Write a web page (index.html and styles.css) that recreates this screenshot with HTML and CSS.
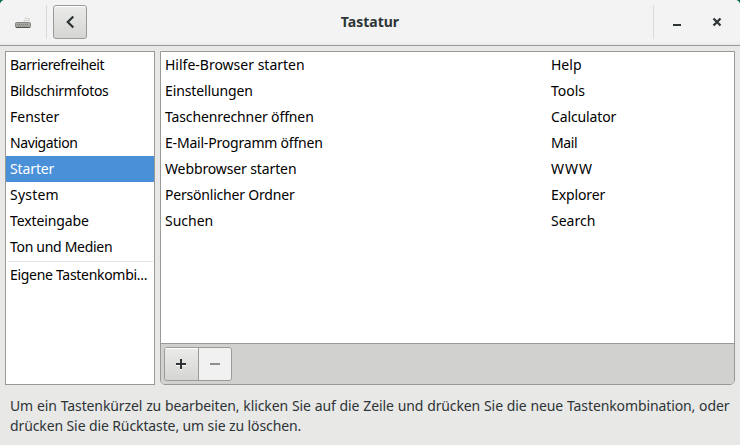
FILE: index.html
```html
<!DOCTYPE html>
<html lang="de">
<head>
<meta charset="utf-8">
<title>Tastatur</title>
<link rel="stylesheet" href="styles.css">
</head>
<body>
<div class="window">
  <header class="titlebar">
    <div class="app-icon">
      <svg width="18" height="16" viewBox="0 0 18 16"><path d="M10 8V6.5H15.5V4.5H10.5" fill="none" stroke="#d0d2cf"/><path d="M12 3.5V1.5" stroke="#e2e2e2"/><rect x="1.5" y="8.5" width="15" height="5" rx="1" fill="#a5a8a3" stroke="#858883"/><path d="M3 10.5H15M4 12H14" stroke="#7d807b" stroke-dasharray="1 1"/><path d="M2 13.5H16" stroke="#505350"/></svg>
    </div>
    <button class="back" aria-label="Zurück"><svg width="16" height="16" viewBox="0 0 16 16"><path d="M11.3 2.5L5.8 8L11.3 13.5" fill="none" stroke="#2e3436" stroke-width="2.2"/></svg></button>
    <h1>Tastatur</h1>
    <div class="controls">
      <svg width="16" height="16" viewBox="0 0 16 16"><path d="M4 11H12" stroke="#2e3436" stroke-width="2"/></svg>
      <svg width="16" height="16" viewBox="0 0 16 16"><path d="M4.5 4.5L11.5 11.5M11.5 4.5L4.5 11.5" stroke="#2e3436" stroke-width="2.3"/></svg>
    </div>
  </header>
  <main class="panes">
    <ul class="sidebar">
      <li class="tightest">Barrierefreiheit</li>
      <li class="tighter">Bildschirmfotos</li>
      <li>Fenster</li>
      <li class="tightest">Navigation</li>
      <li class="selected tight">Starter</li>
      <li class="loose">System</li>
      <li class="tight">Texteingabe</li>
      <li class="tighter">Ton und Medien</li>
      <li class="custom tighter">Eigene Tastenkombi...</li>
    </ul>
    <section class="shortcuts">
      <div class="rows">
        <div class="row"><span>Hilfe-Browser starten</span><span>Help</span></div>
        <div class="row"><span class="tight">Einstellungen</span><span>Tools</span></div>
        <div class="row"><span class="tight">Taschenrechner öffnen</span><span class="tight">Calculator</span></div>
        <div class="row"><span class="snug">E-Mail-Programm öffnen</span><span class="tightest">Mail</span></div>
        <div class="row"><span class="tight">Webbrowser starten</span><span class="loosest">WWW</span></div>
        <div class="row"><span class="snug">Persönlicher Ordner</span><span class="tight">Explorer</span></div>
        <div class="row"><span>Suchen</span><span>Search</span></div>
      </div>
      <div class="toolbar">
        <div class="group">
          <button class="add" aria-label="Hinzufügen"><svg width="16" height="16" viewBox="0 0 16 16"><path d="M3 9H13M8 4V14" stroke="#fff" stroke-width="2"/><path d="M3 8H13M8 3V13" stroke="#2e3436" stroke-width="2"/></svg></button>
          <button class="remove" aria-label="Entfernen" disabled><svg width="16" height="16" viewBox="0 0 16 16"><path d="M3 8H13" stroke="#8d9091" stroke-width="2"/></svg></button>
        </div>
      </div>
    </section>
  </main>
  <p class="hint"><span class="first">Um ein Tastenkürzel zu bearbeiten, klicken Sie auf die Zeile und drücken Sie die neue Tastenkombination, oder</span><span class="second">drücken Sie die Rücktaste, um sie zu löschen.</span></p>
</div>
</body>
</html>
```
FILE: styles.css
```css
* { box-sizing: border-box; }
body { margin: 0; background: #006b50; overflow: hidden; font: 14px/26px "Noto Sans", sans-serif; color: #000; }
.window { width: 740px; height: 445px; background: #e8e8e7; border-radius: 5px 5px 0 0; overflow: hidden; }
.titlebar { height: 46px; display: grid; grid-template-columns: 47px 47px 1fr 87px; background: linear-gradient(#f3f3f3 0 42px, #e9e9e9 45px); border-bottom: 1px solid #999a96; }
.app-icon { height: 34px; margin-top: 5px; padding: 9px 0 0 14px; border-right: 1px solid #dadada; }
svg { display: block; }
button { padding: 0; display: grid; place-items: center; border: 1px solid #9a9a96; background: linear-gradient(#ebebea, #d5d5d2); }
.back { width: 34px; height: 34px; margin: 5px 0 0 6px; border-radius: 3px; box-shadow: inset 0 1px #fff; }
h1 { margin: 0; font-size: 14px; line-height: 43px; text-align: center; color: #2e3436; padding-right: 7px; }
.controls { height: 34px; margin-top: 5px; border-left: 1px solid #dadada; display: flex; align-items: center; gap: 24px; padding-left: 15px; }
.panes { height: 339px; padding: 5px 5px 0; display: grid; grid-template-columns: 150px 575px; gap: 5px; }
.sidebar { height: 334px; margin: 0; padding: 0; list-style: none; background: #fff; border: 1px solid #999a96; }
.sidebar li { height: 26px; padding-left: 4px; white-space: nowrap; }
.sidebar .selected { background: #4a90d9; color: #fff; }
.sidebar .custom { height: 27px; margin: 1px 1px 0 2px; padding: 0 0 0 2px; border-top: 1px solid #e3e3e3; }
.tight { letter-spacing: -0.12px; }
.snug { letter-spacing: -0.2px; }
.tighter { letter-spacing: -0.3px; }
.tightest { letter-spacing: -0.4px; }
.loose { letter-spacing: 0.2px; }
.loosest { letter-spacing: 1px; }
.shortcuts { height: 334px; display: flex; flex-direction: column; background: #fff; border: 1px solid #999a96; border-radius: 0 0 5px 5px; overflow: hidden; }
.rows { flex: 1; }
.row { height: 26px; padding-left: 4px; display: grid; grid-template-columns: 386px 1fr; }
.toolbar { height: 41px; padding: 3px; border-top: 1px solid #999a96; background: #d1d1cf; }
.group { width: 68px; height: 34px; display: flex; border: 1px solid #9a9a96; border-radius: 3px; overflow: hidden; }
.group button { height: 32px; border: 0; }
.group .add { width: 34px; padding-right: 1px; border-right: 1px solid #9a9a96; box-shadow: inset 0 1px #fff; }
.group .remove { width: 32px; background: #f1f1f1; }
.hint { margin: 0; padding: 11px 10px 0; color: #2e3436; line-height: 20px; white-space: nowrap; }
.hint span { display: block; }
.first { letter-spacing: -0.11px; word-spacing: 0.37px; }
.second { letter-spacing: -0.11px; }
```
